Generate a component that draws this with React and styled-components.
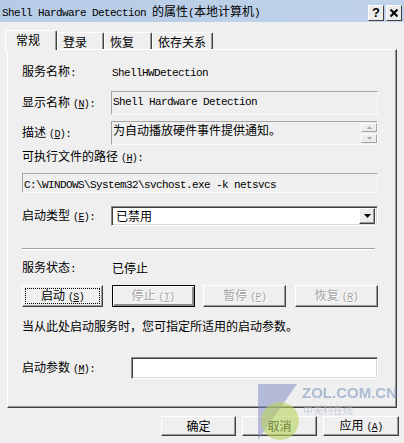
import React from 'react'
import styled, { createGlobalStyle, css } from 'styled-components'

const GlobalStyle = createGlobalStyle`
  html, body {
    margin: 0;
    padding: 0;
    background: #efefef;
  }
  body {
    font-family: "Noto Sans CJK SC", sans-serif;
    font-size: 12px;
    color: #000;
  }
`

const Window = styled.div`
  position: relative;
  width: 404px;
  height: 443px;
  background: #efefef;
  overflow: hidden;
`

const TitleBar = styled.div`
  height: 22px;
  display: flex;
  align-items: center;
  padding: 0 2px 0 2px;
  box-sizing: border-box;
  background: linear-gradient(to right, #b6cbe6, #c0d3ea);
`

const TitleText = styled.div`
  flex: 1;
  white-space: nowrap;
  line-height: 16px;
  padding-top: 1px;
`

const Latin = styled.span`
  font-family: "Liberation Mono", monospace;
  font-size: 11px;
  letter-spacing: -0.6px;
`

const Hot = styled(Latin)`
  margin-left: 3px;
  font-size: 10px;
`

const CaptionButtons = styled.div`
  display: flex;
  gap: 2px;
  margin-top: 3px;
`

const CaptionButton = styled.div`
  width: 16px;
  height: 16px;
  box-sizing: border-box;
  background: #ececec;
  border: 1px solid;
  border-color: #fff #404040 #404040 #fff;
  display: flex;
  align-items: center;
  justify-content: center;
  font: bold 13px "Liberation Sans", sans-serif;
  line-height: 1;
`

const TabStrip = styled.div`
  height: 27px;
  display: flex;
  align-items: flex-end;
  padding-left: 5px;
`

const Tab = styled.div`
  width: ${p => p.$w}px;
  height: ${p => (p.$active ? 20 : 17)}px;
  box-sizing: border-box;
  border: 1px solid;
  border-bottom: none;
  border-color: #fff #404040 transparent #fff;
  border-radius: 2px 2px 0 0;
  box-shadow: inset -1px 0 #9a9a9a;
  background: #efefef;
  padding-left: ${p => (p.$active ? 10 : 5)}px;
  line-height: 16px;
  padding-top: 1px;
  white-space: nowrap;
  ${p =>
    p.$active &&
    css`
      position: relative;
      z-index: 1;
      margin-bottom: -1px;
    `}
`

const Panel = styled.div`
  margin: 0 7px;
  height: 359px;
  box-sizing: border-box;
  border: 1px solid;
  border-color: #fff #404040 #404040 #fff;
  box-shadow: inset -1px -1px #9a9a9a;
  padding: 0 18px 0 14px;
  display: flex;
  flex-direction: column;
`

const Row = styled.div`
  display: flex;
  align-items: center;
  height: ${p => p.$h}px;
  margin-top: ${p => p.$mt}px;
  flex-shrink: 0;
`

const Label = styled.div`
  width: ${p => p.$w || 89}px;
  flex-shrink: 0;
  white-space: nowrap;
  line-height: 16px;
`

const Value = styled.div`
  padding-left: ${p => (p.$flush ? 0 : 1)}px;
  line-height: 16px;
  white-space: nowrap;
`

const ReadBox = styled.div`
  flex: 1;
  height: 100%;
  box-sizing: border-box;
  border: 1px solid;
  border-color: #a6a6a6 #fbfbfb #fbfbfb #a6a6a6;
  padding: ${p => p.$pt || 0}px 1px 0 1px;
  line-height: 16px;
  white-space: nowrap;
  overflow: hidden;
  display: flex;
`

const BoxText = styled.div`
  flex: 1;
`

const SpinCol = styled.div`
  display: flex;
  flex-direction: column;
  gap: 2px;
  padding-top: 1px;
  margin-right: -1px;
`

const SpinButton = styled.div`
  width: 16px;
  height: 9px;
  box-sizing: border-box;
  background: #ededed;
  border: 1px solid;
  border-color: #fff #a0a0a0 #a0a0a0 #fff;
  display: flex;
  align-items: center;
  justify-content: center;
`

const Sunken = styled.div`
  flex: 1;
  height: 100%;
  box-sizing: border-box;
  background: #fff;
  border: 1px solid;
  border-color: #8a8a8a #fff #fff #8a8a8a;
  box-shadow: inset 1px 1px #404040, inset -1px -1px #d8d8d8;
  display: flex;
  align-items: center;
  padding: 2px 2px 2px 4px;
`

const SelectText = styled.div`
  flex: 1;
  line-height: 16px;
`

const DropButton = styled.div`
  width: 16px;
  height: 16px;
  box-sizing: border-box;
  background: #ececec;
  border: 1px solid;
  border-color: #fff #404040 #404040 #fff;
  box-shadow: inset -1px -1px #9a9a9a;
  display: flex;
  align-items: center;
  justify-content: center;
`

const Separator = styled.div`
  height: 2px;
  margin-top: ${p => p.$mt}px;
  margin-right: 3px;
  border-top: 1px solid #a0a0a0;
  border-bottom: 1px solid #fff;
  box-sizing: border-box;
  flex-shrink: 0;
`

const ButtonRow = styled.div`
  display: flex;
  justify-content: space-between;
  height: 22px;
  margin-top: ${p => p.$mt}px;
  flex-shrink: 0;
`

const Button = styled.button`
  width: ${p => p.$w}px;
  height: ${p => p.$h}px;
  box-sizing: border-box;
  padding: 0;
  margin: 0;
  background: #efefef;
  font-family: inherit;
  font-size: 12px;
  line-height: 16px;
  color: ${p => (p.disabled ? '#a3a3a3' : '#000')};
  text-shadow: ${p => (p.disabled ? '1px 1px #fff' : 'none')};
  border: 1px solid;
  border-color: #fff #404040 #404040 #fff;
  box-shadow: inset -1px -1px #9a9a9a;
  ${p =>
    p.$default &&
    css`
      border-color: #000;
      box-shadow: inset 1px 1px #fff, inset -2px -2px #8a8a8a;
    `}
  ${p =>
    p.$focus &&
    css`
      outline: 1px dotted #000;
      outline-offset: -4px;
    `}
`

const Footer = styled.div`
  display: flex;
  justify-content: flex-end;
  gap: 6px;
  padding: 8px 5px 0 0;
`

const Watermark = styled.svg`
  position: absolute;
  left: 252px;
  top: 380px;
  pointer-events: none;
`

const Accel = ({ k }) => (
  <Hot>
    (<u>{k}</u>)
  </Hot>
)

export default function App() {
  return (
    <Window>
      <GlobalStyle />
      <TitleBar>
        <TitleText>
          <Latin>Shell Hardware Detection </Latin>的属性<Latin>(</Latin>本地计算机<Latin>)</Latin>
        </TitleText>
        <CaptionButtons>
          <CaptionButton>?</CaptionButton>
          <CaptionButton>
            <svg width="8" height="8" viewBox="0 0 8 8">
              <path d="M0.5 0.5 L7.5 7.5 M7.5 0.5 L0.5 7.5" stroke="#000" strokeWidth="2" />
            </svg>
          </CaptionButton>
        </CaptionButtons>
      </TitleBar>

      <TabStrip>
        <Tab $w={52} $active>常规</Tab>
        <Tab $w={47}>登录</Tab>
        <Tab $w={48}>恢复</Tab>
        <Tab $w={61}>依存关系</Tab>
      </TabStrip>

      <Panel>
        <Row $h={16} $mt={14}>
          <Label>服务名称<Latin>:</Latin></Label>
          <Value><Latin>ShellHWDetection</Latin></Value>
        </Row>

        <Row $h={24} $mt={11}>
          <Label>显示名称<Accel k="N" /><Latin>:</Latin></Label>
          <ReadBox>
            <BoxText><Latin>Shell Hardware Detection</Latin></BoxText>
          </ReadBox>
        </Row>

        <Row $h={24} $mt={6}>
          <Label>描述<Accel k="D" /><Latin>:</Latin></Label>
          <ReadBox>
            <BoxText>为自动播放硬件事件提供通知。</BoxText>
            <SpinCol>
              <SpinButton>
                <svg width="5" height="3" viewBox="0 0 5 3"><path d="M2.5 0 L5 3 L0 3 Z" fill="#a8a8a8" /></svg>
              </SpinButton>
              <SpinButton>
                <svg width="5" height="3" viewBox="0 0 5 3"><path d="M0 0 L5 0 L2.5 3 Z" fill="#a8a8a8" /></svg>
              </SpinButton>
            </SpinCol>
          </ReadBox>
        </Row>

        <Row $h={16} $mt={4}>
          <Label>可执行文件的路径<Accel k="H" /><Latin>:</Latin></Label>
        </Row>

        <Row $h={20} $mt={8}>
          <ReadBox $pt={1}>
            <BoxText><Latin>C:\WINDOWS\System32\svchost.exe -k netsvcs</Latin></BoxText>
          </ReadBox>
        </Row>

        <Row $h={20} $mt={13}>
          <Label>启动类型<Accel k="E" /><Latin>:</Latin></Label>
          <Sunken>
            <SelectText>已禁用</SelectText>
            <DropButton>
              <svg width="7" height="4" viewBox="0 0 7 4"><path d="M0 0 L7 0 L3.5 4 Z" fill="#000" /></svg>
            </DropButton>
          </Sunken>
        </Row>

        <Separator $mt={22} />

        <Row $h={16} $mt={10}>
          <Label>服务状态<Latin>:</Latin></Label>
          <Value>已停止</Value>
        </Row>

        <ButtonRow $mt={9}>
          <Button $w={81} $h={22} $focus>启动<Accel k="S" /></Button>
          <Button $w={83} $h={22} $default disabled>停止<Accel k="T" /></Button>
          <Button $w={83} $h={22} disabled>暂停<Accel k="P" /></Button>
          <Button $w={83} $h={22} disabled>恢复<Accel k="R" /></Button>
        </ButtonRow>

        <Row $h={16} $mt={11}>
          <Value $flush>当从此处启动服务时，您可指定所适用的启动参数。</Value>
        </Row>

        <Row $h={22} $mt={23}>
          <Label $w={109}>启动参数<Accel k="M" /><Latin>:</Latin></Label>
          <Sunken />
        </Row>
      </Panel>

      <Footer>
        <Button $w={75} $h={20}>确定</Button>
        <Button $w={75} $h={20}>取消</Button>
        <Button $w={76} $h={20}>应用<Accel k="A" /></Button>
      </Footer>

      <Watermark width="152" height="63" viewBox="0 0 152 63">
        <path d="M6 4 L45 4 L6 60 Z" fill="#7d86c4" opacity="0.5" />
        <circle cx="28" cy="41" r="19" fill="#b7d35c" opacity="0.6" />
        <text x="50" y="18" fontFamily="Liberation Sans, sans-serif" fontWeight="bold" fontSize="15" fill="#8ea6c6" opacity="0.7">ZOL.COM.CN</text>
        <text x="51" y="34" fontFamily="Noto Sans CJK SC, sans-serif" fontSize="10" fill="#a9b6c8" opacity="0.6">中关村在线</text>
      </Watermark>
    </Window>
  )
}
